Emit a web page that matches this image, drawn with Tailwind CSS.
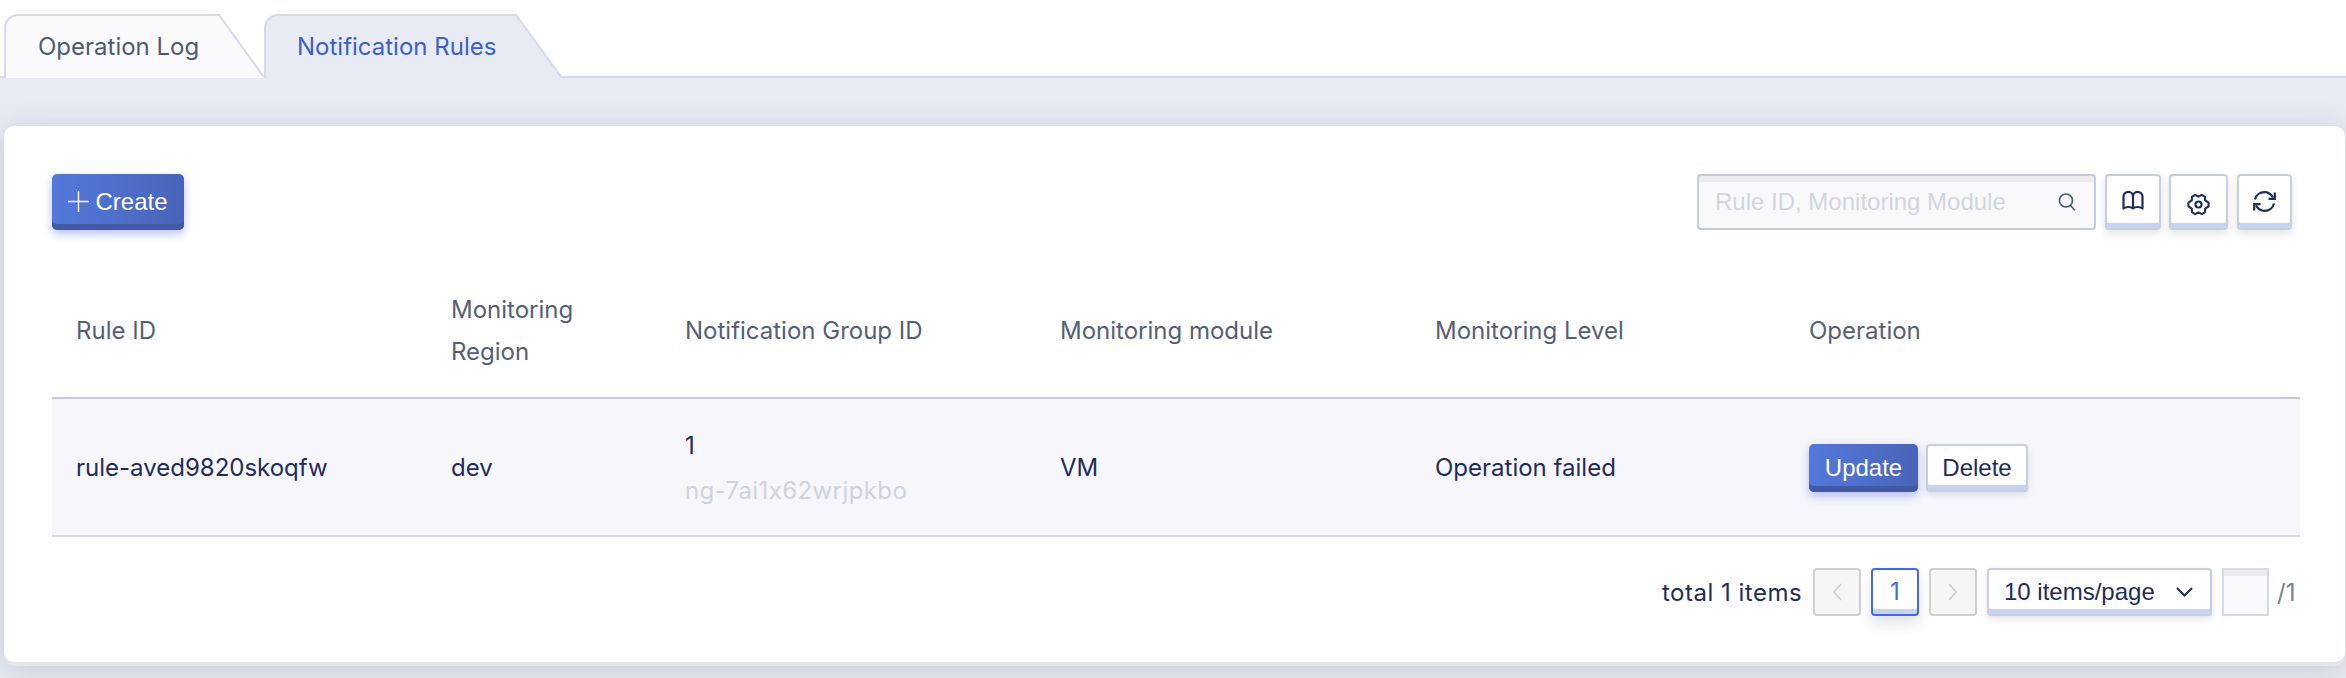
<!DOCTYPE html>
<html lang="en">
<head>
    <meta charset="UTF-8">
    <title>Notification Rules</title>
    <script src="https://cdn.jsdelivr.net/npm/@tailwindcss/browser@4"></script>
</head>
<body class="bg-white font-['Inter',sans-serif] text-[24px] text-[#1e2c5e] overflow-hidden [font-feature-settings:'calt'_0]">
<div class="w-[2346px] h-[678px] flex flex-col overflow-hidden">

    <!-- Tabs -->
    <div class="h-[78px] pt-[14px] pl-[4px] flex border-b-2 border-[#d5d9ea] shrink-0">
        <div class="flex h-[64px]">
            <div class="w-[214px] bg-[#fafafd] border-l-2 border-t-2 border-[#d5d9ea] rounded-tl-[14px] pl-[32px] pt-[15px] text-[#4f5b72] leading-[32px]">Operation Log</div>
            <svg class="w-[46px] h-[64px]" viewBox="0 0 46 64"><path d="M0 1 L1 1 L46 64 L0 64 Z" fill="#fafafd"/><path d="M0 1 L1 1 L45 62" fill="none" stroke="#d5d9ea" stroke-width="2"/></svg>
        </div>
        <div class="flex h-[66px]">
            <div class="w-[251px] bg-[#e9ebf4] border-l-2 border-t-2 border-[#d5d9ea] rounded-tl-[14px] pl-[31px] pt-[15px] text-[#3a5fd0] leading-[32px]">Notification Rules</div>
            <svg class="w-[49px] h-[66px]" viewBox="0 0 49 66"><path d="M0 1 L1 1 L47 64 L49 66 L0 66 Z" fill="#e9ebf4"/><path d="M0 1 L1 1 L47 64" fill="none" stroke="#d5d9ea" stroke-width="2"/></svg>
        </div>
    </div>

    <!-- Content area -->
    <div class="flex-1 bg-[#e9ebf4] pt-[48px] px-[4px]">
        <div class="w-[2341px] h-[536px] bg-white rounded-[10px] shadow-[0_4px_0_#e6e6e8,0_6px_32px_rgba(40,44,70,0.2)] pt-[48px] px-[48px]">

            <!-- Toolbar -->
            <div class="flex justify-between h-[56px] w-[2240px]">
                <button class="w-[132px] h-[56px] flex items-center justify-center gap-[6px] rounded-[5px] bg-gradient-to-r from-[#5479dc] to-[#4864b8] shadow-[inset_0_-6px_0_#425aa6,0_4px_10px_rgba(72,100,220,0.4)] text-white font-['Liberation_Sans',sans-serif] pb-[1px]">
                    <svg class="w-[21px] h-[21px]" viewBox="0 0 21 21"><path d="M10.500 0V21M0 10.500H21" stroke="#fff" stroke-width="1.400"/></svg>
                    Create
                </button>
                <div class="flex">
                    <div class="w-[399px] h-[56px] rounded-[4px] border-2 border-[#c5cadf] bg-[#f9f9fc] shadow-[inset_0_6px_0_#ececf0] flex items-center justify-between pl-[16px] pr-[18px]">
                        <span class="font-['Liberation_Sans',sans-serif] text-[#d3d5de] whitespace-nowrap">Rule ID, Monitoring Module</span>
                        <svg class="w-[18px] h-[18px] shrink-0" viewBox="0 0 18 18" fill="none" stroke="#4f5b78" stroke-width="1.700"><circle cx="8" cy="7.500" r="6.500"/><path d="M12.500 12.500L16.800 17.200"/></svg>
                    </div>
                    <button class="w-[56px] h-[56px] ml-[9px] rounded-[4px] border-2 border-[#c9cde0] bg-white shadow-[inset_0_-5px_0_#c6d3f1,0_4px_8px_rgba(50,55,90,0.14)] flex justify-center pt-[15px]">
                        <svg class="w-[22px] h-[19px]" viewBox="0 0 22 19" fill="none" stroke="#1e2c5e" stroke-width="2.200" stroke-linejoin="round"><path d="M11 17.500C9 15.500 4 15.500 1.500 17.500V5.500C1.500 3 3.500 1 6.500 1C9 1 11 3 11 5.500V17.500C13 15.500 18 15.500 20.500 17.500V5.500C20.500 3 18.500 1 15.500 1C13 1 11 3 11 5.500"/></svg>
                    </button>
                    <button class="w-[59px] h-[56px] ml-[8px] rounded-[4px] border-2 border-[#c9cde0] bg-white shadow-[inset_0_-5px_0_#c6d3f1,0_4px_8px_rgba(50,55,90,0.14)] flex justify-center pt-[17px]">
                        <svg class="w-[23px] h-[23px]" viewBox="0 0 24 23" fill="none" stroke="#1e2c5e" stroke-width="2.200" stroke-linejoin="round"><path d="M8.500 1.500L12 3.300L15.500 1.500L18.800 3.500L19 7.300L22.500 9.500V13.500L19 15.700L18.800 19.500L15.500 21.500L12 19.700L8.500 21.500L5.200 19.500L5 15.700L1.500 13.500V9.500L5 7.300L5.200 3.500Z"/><circle cx="12" cy="11.500" r="3.200"/></svg>
                    </button>
                    <button class="w-[55px] h-[56px] ml-[9px] rounded-[4px] border-2 border-[#c9cde0] bg-white shadow-[inset_0_-5px_0_#c6d3f1,0_4px_8px_rgba(50,55,90,0.14)] flex justify-center pt-[15px]">
                        <svg class="w-[25px] h-[21px]" viewBox="0 0 25 21" fill="none" stroke="#1e2c5e" stroke-width="2.200"><path d="M3 8.500C4 4 8 1.200 12.500 1.200C16 1.200 19 3 21 6.500"/><path d="M22 12.500C21 17 17 19.800 12.500 19.800C9 19.800 6 18 4 14.500"/><path d="M22.800 1.500V7.800H16.500"/><path d="M2.200 19.500V13.200H8.500"/></svg>
                    </button>
                </div>
            </div>

            <!-- Table -->
            <table class="w-[2248px] table-fixed mt-[34px] text-left">
                <colgroup>
                    <col class="w-[375px]"><col class="w-[234px]"><col class="w-[375px]"><col class="w-[375px]"><col class="w-[374px]"><col>
                </colgroup>
                <thead class="text-[#54607a]">
                    <tr class="h-[134px] border-b-2 border-[#c5c8dc]">
                        <th class="font-normal px-[24px] leading-[42px]">Rule ID</th>
                        <th class="font-normal px-[24px] leading-[42px]">Monitoring Region</th>
                        <th class="font-normal px-[24px] leading-[42px]">Notification Group ID</th>
                        <th class="font-normal px-[24px] leading-[42px]">Monitoring module</th>
                        <th class="font-normal px-[24px] leading-[42px]">Monitoring Level</th>
                        <th class="font-normal px-[24px] leading-[42px]">Operation</th>
                    </tr>
                </thead>
                <tbody>
                    <tr class="h-[138px] bg-[#f6f6fb] border-b-2 border-[#d5d8e9]">
                        <td class="px-[24px] pt-[2px]">rule-aved9820skoqfw</td>
                        <td class="px-[24px] pt-[2px]">dev</td>
                        <td class="px-[24px] pt-[2px] leading-[45px]">1<br><span class="text-[#d0d2dc] tracking-[0.4px]">ng-7ai1x62wrjpkbo</span></td>
                        <td class="px-[24px] pt-[2px]">VM</td>
                        <td class="px-[24px] pt-[2px]">Operation failed</td>
                        <td class="px-[24px]">
                            <div class="flex gap-[8px] mt-[1px]">
                                <button class="w-[109px] h-[48px] rounded-[5px] bg-gradient-to-r from-[#5479dc] to-[#4864b8] shadow-[inset_0_-6px_0_#425aa6,0_4px_10px_rgba(72,100,220,0.4)] text-white font-['Liberation_Sans',sans-serif]">Update</button>
                                <button class="w-[102px] h-[48px] rounded-[4px] border-2 border-[#c9cde0] bg-white shadow-[inset_0_-5px_0_#c6d3f1,0_3px_6px_rgba(50,55,90,0.12)] font-['Liberation_Sans',sans-serif]">Delete</button>
                            </div>
                        </td>
                    </tr>
                </tbody>
            </table>

            <!-- Pagination -->
            <div class="flex items-start mt-[31px] pl-[1610px]">
                <span class="w-[151px] leading-[49px] whitespace-nowrap tracking-[0.5px]">total 1 items</span>
                <button class="w-[48px] h-[48px] rounded-[4px] border-2 border-[#cfcfd2] bg-[#f6f6f6] flex items-center justify-center">
                    <svg class="w-[10px] h-[18px]" viewBox="0 0 10 18" fill="none" stroke="#d0d0d3" stroke-width="1.800"><path d="M9 1L2 9L9 17"/></svg>
                </button>
                <button class="w-[48px] h-[48px] ml-[10px] rounded-[4px] border-2 border-[#3f6be6] bg-white text-[#3f6be6] shadow-[inset_0_-5px_0_#c6d3f1,0_8px_14px_rgba(50,55,90,0.14)]">1</button>
                <button class="w-[48px] h-[48px] ml-[10px] rounded-[4px] border-2 border-[#cfcfd2] bg-[#f6f6f6] flex items-center justify-center">
                    <svg class="w-[10px] h-[18px]" viewBox="0 0 10 18" fill="none" stroke="#d0d0d3" stroke-width="1.800"><path d="M1 1L8 9L1 17"/></svg>
                </button>
                <button class="w-[225px] h-[48px] ml-[10px] rounded-[4px] border-2 border-[#c9cde0] bg-white shadow-[inset_0_-5px_0_#c6d3f1,0_3px_6px_rgba(50,55,90,0.14)] flex items-center justify-between pl-[15px] pr-[17px] whitespace-nowrap font-['Liberation_Sans',sans-serif]">
                    10 items/page
                    <svg class="w-[17px] h-[10px]" viewBox="0 0 17 10" fill="none" stroke="#1e2c5e" stroke-width="2"><path d="M1 1L8.500 8.500L16 1"/></svg>
                </button>
                <div class="w-[47px] h-[48px] ml-[10px] border-2 border-[#d5d9ea] bg-[#f9f9fc] shadow-[inset_0_6px_0_#ececf0]"></div>
                <span class="ml-[8px] leading-[49px] text-[#76829e]">/1</span>
            </div>
        </div>
    </div>
</div>
</body>
</html>
